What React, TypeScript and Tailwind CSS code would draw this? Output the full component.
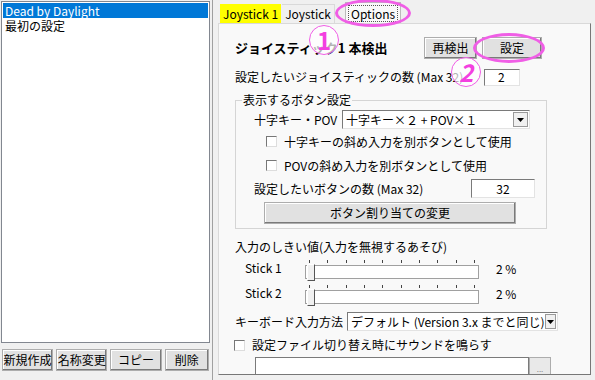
import React from "react";

const font = { fontFamily: '"Noto Sans CJK JP", "Liberation Sans", sans-serif' };

const Btn: React.FC<{ label: string; className?: string }> = ({ label, className }) => (
  <button
    className={
      "h-[22px] border border-[#adadad] bg-[#e1e1e1] text-[12px] leading-none text-black shadow-[inset_-1px_-1px_0_#7a7a7a,inset_1px_1px_0_#fff] " +
      (className ?? "")
    }
  >
    {label}
  </button>
);

const Check: React.FC<{ label: string; className?: string }> = ({ label, className }) => (
  <div className={"flex items-center gap-[7px] text-[12px] " + (className ?? "")}>
    <span className="h-[11px] w-[11px] border border-[#777] border-r-[#ddd] border-b-[#ddd] bg-white" />
    <span>{label}</span>
  </div>
);

const Select: React.FC<{ value: string; className?: string }> = ({ value, className }) => (
  <div
    className={
      "flex h-[19px] items-center border border-[#7a7a7a] border-r-[#e3e3e3] border-b-[#e3e3e3] bg-white pl-[3px] text-[12px] " +
      (className ?? "")
    }
  >
    <span className="flex-1 whitespace-nowrap">{value}</span>
    <span className="mr-[1px] flex h-[15px] w-[15px] items-center justify-center border border-[#999] bg-[#f0f0f0]">
      <svg width="7" height="4" viewBox="0 0 7 4">
        <path d="M0 0h7L3.5 4z" fill="#000" />
      </svg>
    </span>
  </div>
);

const Slider: React.FC<{ label: string }> = ({ label }) => (
  <div className="flex items-end">
    <span className="w-[70px] pb-[2px] pl-[10px] text-[12px]">{label}</span>
    <div className="flex w-[174px] flex-col">
      <div className="flex justify-between px-[4px] pb-[2px]">
        {Array.from({ length: 10 }).map((_, i) => (
          <span key={i} className="h-[3px] w-[1px] bg-[#444]" />
        ))}
      </div>
      <div className="relative h-[14px] border border-[#a0a0a0] bg-white">
        <span className="absolute left-[1px] top-[-2px] h-[17px] w-[8px] border border-[#555] border-l-white border-t-white bg-[#f0f0f0]" />
      </div>
    </div>
    <span className="pb-[1px] pl-[17px] text-[12px]">2 %</span>
  </div>
);

export default function App() {
  return (
    <div style={font} className="relative flex h-[380px] w-[595px] overflow-hidden bg-[#f0f0f0] text-black">
      {/* left list */}
      <div className="flex w-[213px] flex-col border-r border-[#a0a0a0] pr-[1px]">
        <div className="m-[1px] flex-1 border border-[#828790] bg-white p-[1px] text-[12px] leading-[15px]">
          <div className="bg-[#0078d7] px-[2px] text-white">Dead by Daylight</div>
          <div className="px-[2px]">最初の設定</div>
        </div>
        <div className="flex gap-[3px] px-[2px] pb-[9px] pt-[5px]">
          <Btn label="新規作成" className="w-[52px]" />
          <Btn label="名称変更" className="w-[52px]" />
          <Btn label="コピー" className="w-[52px]" />
          <Btn label="削除" className="w-[45px]" />
        </div>
      </div>

      {/* right tabs */}
      <div className="flex flex-1 flex-col pl-[5px] pr-[4px] pt-[3px]">
        <div className="flex h-[20px] items-end text-[12px]">
          <div className="ml-[2px] flex h-[19px] items-center bg-[#ffff00] px-[3px]">Joystick 1</div>
          <div className="ml-[1px] flex h-[19px] items-center border-t border-r border-[#d9d9d9] px-[3px]">Joystick</div>
          <div className="ml-[10px] flex h-[21px] items-center border border-b-0 border-[#bbb] bg-[#f9f9f9] px-[2px]">
            <span className="border border-dotted border-[#555] px-[2px] leading-[15px]">Options</span>
          </div>
        </div>
        <div className="mb-[6px] flex flex-1 flex-col border border-[#d9d9d9] border-r-[#777] border-b-[#777] bg-[#f9f9f9] pl-[16px] pr-[10px] text-[12px]">
          <div className="flex items-center pt-[13px]">
            <span className="flex-1 text-[13px] font-bold">ジョイスティック1 本検出</span>
            <Btn label="再検出" className="w-[53px]" />
            <Btn label="設定" className="ml-[5px] mr-[38px] w-[60px]" />
          </div>
          <div className="mt-[9px] flex items-center">
            <span className="flex-1">設定したいジョイスティックの数 (Max 32)</span>
            <div className="mr-[60px] flex h-[17px] w-[36px] items-center border border-[#7a7a7a] border-r-[#e3e3e3] border-b-[#e3e3e3] bg-white pl-[13px]">
              2
            </div>
          </div>

          <div className="relative mr-[33px] mt-[14px] h-[129px] border border-[#d5d5d5] pl-[18px] pt-[9px]">
            <span className="absolute left-[6px] top-[-9px] bg-[#f9f9f9] px-[1px] leading-[16px]">表示するボタン設定</span>
            <div className="flex items-center">
              <span className="w-[88px]">十字キー・POV</span>
              <Select value="十字キー×２ + POV×１" className="w-[188px]" />
            </div>
            <Check label="十字キーの斜め入力を別ボタンとして使用" className="ml-[12px] mt-[4px] h-[17px]" />
            <Check label="POVの斜め入力を別ボタンとして使用" className="ml-[12px] mt-[7px] h-[17px]" />
            <div className="mt-[5px] flex items-center">
              <span className="flex-1">設定したいボタンの数 (Max 32)</span>
              <div className="mr-[11px] flex h-[19px] w-[64px] items-center justify-center border border-[#7a7a7a] border-r-[#e3e3e3] border-b-[#e3e3e3] bg-white">
                32
              </div>
            </div>
            <Btn label="ボタン割り当ての変更" className="ml-[10px] mt-[4px] w-[252px]" />
          </div>

          <div className="mt-[9px]">入力のしきい値(入力を無視するあそび)</div>
          <div className="mt-[3px]">
            <Slider label="Stick 1" />
          </div>
          <div className="mt-[5px]">
            <Slider label="Stick 2" />
          </div>
          <div className="mt-[8px] flex items-center">
            <span className="w-[112px]">キーボード入力方法</span>
            <Select value="デフォルト (Version 3.x までと同じ)" className="w-[211px]" />
          </div>
          <Check label="設定ファイル切り替え時にサウンドを鳴らす" className="-ml-[1px] mt-[6px] h-[16px]" />
          <div className="ml-[20px] mt-[4px] flex h-[17px]">
            <div className="w-[274px] border border-[#7a7a7a] border-b-0 bg-white" />
            <div className="flex w-[22px] items-end justify-center border border-[#adadad] border-b-0 bg-[#e9e9e9] text-[8px] leading-[10px] text-[#888]">
              ...
            </div>
          </div>
        </div>
      </div>

      {/* pink annotations */}
      <div className="pointer-events-none absolute left-[335px] top-[-1px] h-[28px] w-[76px] rounded-[50%] border-[3px] border-[#f05ee6]" />
      <div className="pointer-events-none absolute left-[473px] top-[33px] h-[30px] w-[72px] rounded-[50%] border-[3px] border-[#f05ee6]" />
      <div className="pointer-events-none absolute left-[309px] top-[25px] flex h-[30px] w-[30px] items-center justify-center rounded-full border border-[#f05ee6] bg-white/70 text-[24px] font-bold leading-none text-[#f33fe0]">
        1
      </div>
      <div className="pointer-events-none absolute left-[451px] top-[57px] flex h-[30px] w-[30px] items-center justify-center rounded-full border border-[#f05ee6] bg-white/70 text-[24px] font-bold italic leading-none text-[#f33fe0]">
        2
      </div>
    </div>
  );
}
